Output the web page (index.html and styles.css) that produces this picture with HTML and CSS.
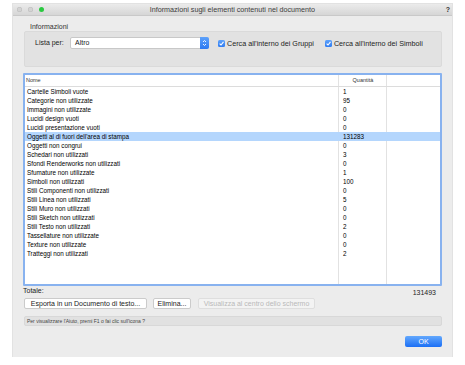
FILE: index.html
```html
<!DOCTYPE html>
<html lang="it">
<head>
  <meta charset="UTF-8">
  <title>Informazioni sugli elementi contenuti nel documento</title>
  <link rel="stylesheet" href="styles.css">
</head>
<body>

  <div class="window">

    <div class="titlebar">
      <div class="lights">
        <span class="light"></span>
        <span class="light"></span>
        <span class="light green"></span>
      </div>
      <div class="title">Informazioni sugli elementi contenuti nel documento</div>
      <div class="help-mark">?</div>
    </div>

    <div class="content">

      <div class="group-label">Informazioni</div>
      <div class="group-box">
        <span class="field-label">Lista per:</span>
        <div class="select">
          <span class="select-value">Altro</span>
          <span class="stepper">
            <svg width="5" height="8" viewBox="0 0 5 8">
              <path d="M1 3 L2.5 1.5 L4 3 M1 5 L2.5 6.5 L4 5" fill="none" stroke="#fff" stroke-width="0.9"/>
            </svg>
          </span>
        </div>
        <label class="check first">
          <span class="box">
            <svg width="7" height="7" viewBox="0 0 7 7">
              <path d="M1.6 3.6 L3 5 L5.5 1.8" fill="none" stroke="#fff" stroke-width="1.1"/>
            </svg>
          </span>
          Cerca all'interno dei Gruppi
        </label>
        <label class="check">
          <span class="box">
            <svg width="7" height="7" viewBox="0 0 7 7">
              <path d="M1.6 3.6 L3 5 L5.5 1.8" fill="none" stroke="#fff" stroke-width="1.1"/>
            </svg>
          </span>
          Cerca all'interno dei Simboli
        </label>
      </div>

      <div class="list">
        <div class="row head">
          <span class="cell">Nome</span>
          <span class="cell qty-head">Quantità</span>
          <span class="cell"></span>
        </div>
        <div class="row"><span class="cell">Cartelle Simboli vuote</span><span class="cell qty">1</span><span class="cell"></span></div>
        <div class="row"><span class="cell">Categorie non utilizzate</span><span class="cell qty">95</span><span class="cell"></span></div>
        <div class="row"><span class="cell">Immagini non utilizzate</span><span class="cell qty">0</span><span class="cell"></span></div>
        <div class="row"><span class="cell">Lucidi design vuoti</span><span class="cell qty">0</span><span class="cell"></span></div>
        <div class="row"><span class="cell">Lucidi presentazione vuoti</span><span class="cell qty">0</span><span class="cell"></span></div>
        <div class="row selected"><span class="cell">Oggetti al di fuori dell'area di stampa</span><span class="cell qty">131283</span><span class="cell"></span></div>
        <div class="row"><span class="cell">Oggetti non congrui</span><span class="cell qty">0</span><span class="cell"></span></div>
        <div class="row"><span class="cell">Schedari non utilizzati</span><span class="cell qty">3</span><span class="cell"></span></div>
        <div class="row"><span class="cell">Sfondi Renderworks non utilizzati</span><span class="cell qty">0</span><span class="cell"></span></div>
        <div class="row"><span class="cell">Sfumature non utilizzate</span><span class="cell qty">1</span><span class="cell"></span></div>
        <div class="row"><span class="cell">Simboli non utilizzati</span><span class="cell qty">100</span><span class="cell"></span></div>
        <div class="row"><span class="cell">Stili Componenti non utilizzati</span><span class="cell qty">0</span><span class="cell"></span></div>
        <div class="row"><span class="cell">Stili Linea non utilizzati</span><span class="cell qty">5</span><span class="cell"></span></div>
        <div class="row"><span class="cell">Stili Muro non utilizzati</span><span class="cell qty">0</span><span class="cell"></span></div>
        <div class="row"><span class="cell">Stili Sketch non utilizzati</span><span class="cell qty">0</span><span class="cell"></span></div>
        <div class="row"><span class="cell">Stili Testo non utilizzati</span><span class="cell qty">2</span><span class="cell"></span></div>
        <div class="row"><span class="cell">Tassellature non utilizzate</span><span class="cell qty">0</span><span class="cell"></span></div>
        <div class="row"><span class="cell">Texture non utilizzate</span><span class="cell qty">0</span><span class="cell"></span></div>
        <div class="row"><span class="cell">Tratteggi non utilizzati</span><span class="cell qty">2</span><span class="cell"></span></div>
        <div class="row filler"><span class="cell"></span><span class="cell"></span><span class="cell"></span></div>
      </div>

      <div class="total-row">
        <span class="total-label">Totale:</span>
        <span class="total-value">131493</span>
      </div>

      <div class="buttons">
        <button class="btn export">Esporta in un Documento di testo...</button>
        <button class="btn delete">Elimina...</button>
        <button class="btn center" disabled>Visualizza al centro dello schermo</button>
      </div>

      <div class="help-bar">Per visualizzare l'Aiuto, premi F1 o fai clic sull'icona ?</div>

      <div class="footer">
        <button class="ok-button">OK</button>
      </div>

    </div>
  </div>

</body>
</html>
```

FILE: styles.css
```css
body {
  margin: 0;
  background-color: #ffffff;
  font-family: "Liberation Sans", Arial, sans-serif;
  color: #222;
}

.window {
  margin: 4px 0 0 13px;
  width: 439px;
  height: 353px;
  background-color: #ececec;
  box-shadow: 0 0 0 1px #e2e2e2;
}

/* Title bar */
.titlebar {
  height: 12px;
  display: flex;
  align-items: center;
  background: linear-gradient(#ebebeb, #d6d6d6);
  border-bottom: 1px solid #c9c9c9;
  box-sizing: border-box;
}

.lights {
  display: flex;
  gap: 6px;
  padding-left: 4px;
}

.light {
  width: 5px;
  height: 5px;
  border-radius: 50%;
  background-color: #d3d3d3;
  box-shadow: inset 0 0 0 0.5px #bdbdbd;
}

.light.green {
  background-color: #2ac940;
  box-shadow: none;
}

.title {
  flex: 1;
  text-align: center;
  font-size: 7.2px;
  color: #3c3c3c;
  margin-left: -25px;
}

.help-mark {
  font-size: 7px;
  font-weight: bold;
  color: #333;
  padding-right: 2px;
}

.content {
  padding: 0 10px;
}

/* Informazioni group */
.group-label {
  margin: 7px 0 0 7px;
  height: 8px;
  line-height: 8px;
  font-size: 7px;
  color: #333;
}

.group-box {
  margin-left: 1px;
  width: 418px;
  height: 36px;
  box-sizing: border-box;
  background-color: #e2e2e2;
  border: 1px solid #dadada;
  border-radius: 2px;
  padding: 5px 0 0 10px;
  display: flex;
  align-items: flex-start;
}

.field-label {
  font-size: 7px;
  line-height: 12px;
  color: #222;
  width: 35px;
}

.select {
  width: 139px;
  height: 12px;
  box-sizing: border-box;
  display: flex;
  background-color: #fff;
  border: 1px solid #c8c8c8;
  border-radius: 2px;
}

.select-value {
  flex: 1;
  font-size: 7px;
  line-height: 10px;
  padding-left: 4px;
}

.stepper {
  width: 9px;
  margin: -1px -1px -1px 0;
  border-radius: 0 2px 2px 0;
  background: linear-gradient(#5ea2fb, #2b79f2);
  display: flex;
  align-items: center;
  justify-content: center;
}

.check {
  display: flex;
  align-items: center;
  gap: 2px;
  height: 12px;
  font-size: 7.2px;
  color: #222;
  margin-left: 11px;
}

.check.first {
  margin-left: 9px;
}

.box {
  width: 7px;
  height: 7px;
  border-radius: 1.5px;
  background: linear-gradient(#5ea2fb, #2f7cf2);
  display: flex;
}

/* List */
.list {
  margin-top: 6px;
  height: 213px;
  box-sizing: border-box;
  border: 2px solid #88b2ef;
  border-radius: 1px;
  background-color: #fff;
  display: flex;
  flex-direction: column;
}

.row {
  display: grid;
  grid-template-columns: 314px 48px 1fr;
  height: 9px;
  font-size: 6.3px;
  line-height: 9px;
  color: #000;
}

.row .cell {
  padding-left: 2px;
  white-space: nowrap;
  overflow: hidden;
}

.row .cell:nth-child(1),
.row .cell:nth-child(2) {
  border-right: 1px solid #e2e2e2;
}

.row .cell.qty {
  padding-left: 4px;
}

.row.head {
  height: 12px;
  line-height: 11px;
  font-size: 5.5px;
  color: #333;
  border-bottom: 1px solid #dcdcdc;
  box-sizing: border-box;
}

.row.head .cell {
  padding-left: 1px;
}

.row.head .qty-head {
  text-align: center;
}

.row.selected {
  background-color: #b4d6fd;
}

.row.selected .cell {
  border-right-color: transparent;
}

.row.filler {
  flex: 1;
}

/* Bottom area */
.total-row {
  display: flex;
  justify-content: space-between;
  height: 10px;
  margin-top: 1px;
  font-size: 7px;
  color: #222;
}

.total-label {
  line-height: 8px;
}

.total-value {
  align-self: flex-end;
  line-height: 8px;
  padding-right: 6px;
}

.buttons {
  display: flex;
  margin: 1px 0 0 1px;
}

.btn {
  height: 11px;
  padding: 0;
  font-family: "Liberation Sans", Arial, sans-serif;
  font-size: 7px;
  line-height: 9px;
  color: #222;
  background-color: #fff;
  border: 1px solid #cbcbcb;
  border-radius: 2px;
}

.btn.export {
  width: 123px;
}

.btn.delete {
  width: 38px;
  margin-left: 6px;
}

.btn.center {
  width: 117px;
  margin-left: 7px;
  color: #b9b9b9;
  background-color: #f3f3f3;
  border-color: #dedede;
}

.help-bar {
  margin: 7px 0 0 1px;
  height: 10px;
  box-sizing: border-box;
  background-color: #e1e1e1;
  border: 1px solid #d8d8d8;
  border-radius: 2px;
  font-size: 5px;
  line-height: 8px;
  padding-left: 2px;
  color: #444;
}

.footer {
  display: flex;
  justify-content: flex-end;
  margin-top: 10px;
}

.ok-button {
  width: 37px;
  height: 11px;
  padding: 0;
  border: none;
  border-radius: 2px;
  background: linear-gradient(#63a8fd, #1b6ff5);
  color: #fff;
  font-family: "Liberation Sans", Arial, sans-serif;
  font-size: 7px;
  line-height: 11px;
}
```
